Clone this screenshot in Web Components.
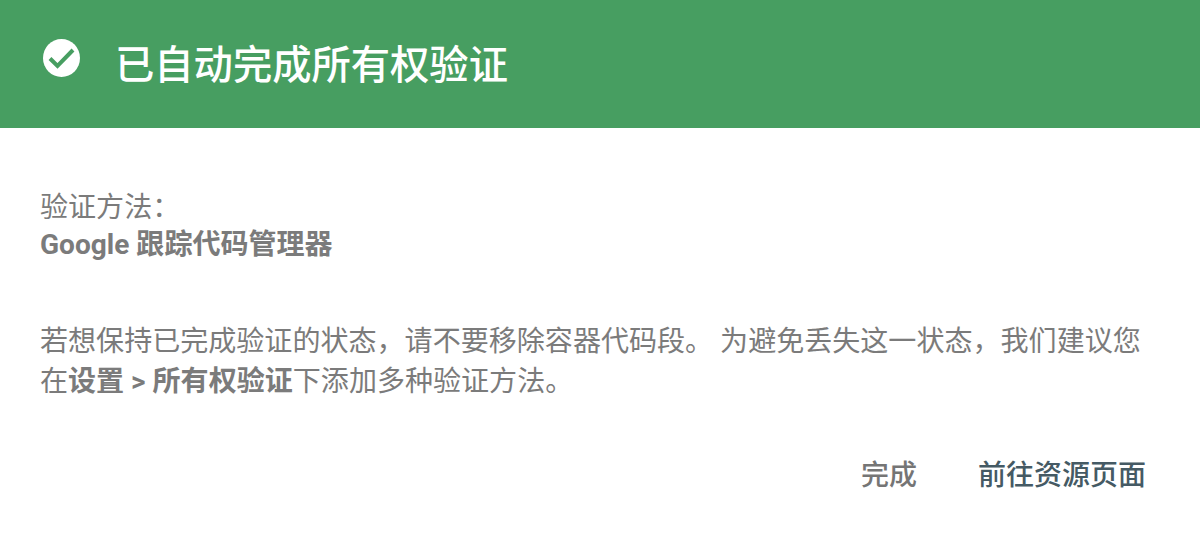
<!DOCTYPE html>
<html lang="zh-CN">
<head>
<meta charset="utf-8">
<style>
  html, body { margin: 0; background: #fff; }
  body { width: 1200px; height: 534px; overflow: hidden; font-family: Roboto, "Noto Sans CJK SC", sans-serif; }
</style>
</head>
<body>
<verify-dialog>
  <span slot="title">已自动完成所有权验证</span>
  <span slot="label">验证方法：</span>
  <span slot="method">Google 跟踪代码管理器</span>
  <span slot="note">若想保持已完成验证的状态，请不要移除容器代码段。 为避免丢失这一状态，我们建议您<br>在<b>设置 &gt; 所有权验证</b>下添加多种验证方法。</span>
  <dialog-action slot="actions">完成</dialog-action>
  <dialog-action slot="actions" primary>前往资源页面</dialog-action>
</verify-dialog>
<script>
const dialogTemplate = document.createElement("template");
dialogTemplate.innerHTML = `
  <style>
    :host { display: flex; flex-direction: column; width: 1200px; height: 534px; color: #7b7b7b; }
    header { display: flex; align-items: center; gap: 35px; height: 128px; box-sizing: border-box; padding: 0 0 0 43px; background: #479e61; color: #fff; font-size: 39.3px; font-weight: 500; line-height: 48px; }
    svg { width: 37px; height: 38px; flex: none; margin-top: -12px; }
    .title { margin-top: 4px; }
    .body { padding: 61px 40px 0 40px; font-size: 28.05px; }
    .method { line-height: 37px; }
    .method ::slotted([slot="method"]) { font-weight: 700; }
    .note { margin-top: 59px; line-height: 40px; }
    footer { display: flex; justify-content: flex-end; gap: 61px; padding: 54px 54px 0 0; }
  </style>
  <header>
    <svg viewBox="0 0 37 38"><ellipse cx="18.5" cy="19" rx="18.5" ry="19" fill="#fff"/><path d="M7 19.5l7.5 7.5L30 11" fill="none" stroke="#479e61" stroke-width="4"/></svg>
    <div class="title"><slot name="title"></slot></div>
  </header>
  <div class="body">
    <div class="method"><slot name="label"></slot><br><slot name="method"></slot></div>
    <div class="note"><slot name="note"></slot></div>
  </div>
  <footer><slot name="actions"></slot></footer>
`;

class VerifyDialog extends HTMLElement {
  constructor() {
    super();
    this.attachShadow({ mode: "open" });
    this.shadowRoot.appendChild(dialogTemplate.content.cloneNode(true));
  }
}

const actionTemplate = document.createElement("template");
actionTemplate.innerHTML = `
  <style>
    :host { display: block; font-size: 28px; font-weight: 500; line-height: 40px; color: #757575; }
    :host([primary]) { color: #455a64; }
  </style>
  <slot></slot>
`;

class DialogAction extends HTMLElement {
  constructor() {
    super();
    this.attachShadow({ mode: "open" });
    this.shadowRoot.appendChild(actionTemplate.content.cloneNode(true));
  }
}

customElements.define("verify-dialog", VerifyDialog);
customElements.define("dialog-action", DialogAction);
</script>
</body>
</html>
